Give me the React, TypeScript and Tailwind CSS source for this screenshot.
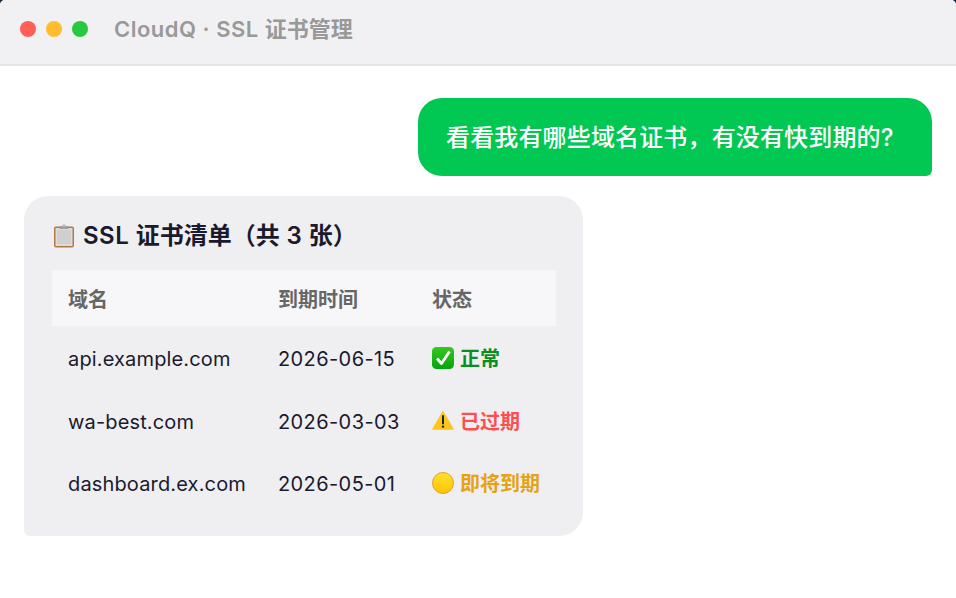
import React from "react";

const FONT = "font-['Inter','Noto_Sans_CJK_SC',sans-serif]";

const ClipboardIcon = () => (
  <svg width="24" height="24" viewBox="0 0 24 24" className="shrink-0">
    <rect x="2" y="2.5" width="20" height="21" rx="2" fill="#b07a3c" />
    <rect x="3.5" y="4" width="17" height="18" fill="#dcdcdc" />
    <rect x="5" y="6" width="14" height="14" fill="#cfcfcf" />
    <rect x="7.5" y="2" width="9" height="3" rx="1" fill="#9d9d9d" />
    <circle cx="12" cy="1.8" r="1.6" fill="#b5b5b5" />
  </svg>
);

const CheckIcon = () => (
  <svg width="22" height="22" viewBox="0 0 22 22" className="-mt-[3px] shrink-0">
    <defs>
      <linearGradient id="chk" x1="0" y1="0" x2="0" y2="1">
        <stop offset="0" stopColor="#35c81e" />
        <stop offset="1" stopColor="#04a50e" />
      </linearGradient>
    </defs>
    <rect width="22" height="22" rx="4.5" fill="url(#chk)" />
    <path d="M5 11.5 L9.5 16.5 L17.5 4.5" fill="none" stroke="#fff" strokeWidth="2.8" strokeLinejoin="round" />
  </svg>
);

const WarnIcon = () => (
  <svg width="22" height="20" viewBox="0 0 22 20" className="-mt-1 shrink-0">
    <path d="M11 0.5 L21.8 19 Q22 19.7 21 19.7 L1 19.7 Q0 19.7 0.2 19 Z" fill="#ffc51f" />
    <rect x="10" y="5" width="2" height="9.5" rx="1" fill="#222" />
    <circle cx="11" cy="16.6" r="1.2" fill="#222" />
  </svg>
);

const YellowIcon = () => (
  <svg width="22" height="22" viewBox="0 0 22 22" className="-mt-[2px] shrink-0">
    <defs>
      <linearGradient id="ylw" x1="0" y1="0" x2="0" y2="1">
        <stop offset="0" stopColor="#ffe033" />
        <stop offset="1" stopColor="#ffc400" />
      </linearGradient>
    </defs>
    <circle cx="11" cy="11" r="10.5" fill="url(#ylw)" stroke="#e0a030" strokeWidth="1" />
  </svg>
);

const rows = [
  { domain: "api.example.com", date: "2026-06-15", icon: <CheckIcon />, status: "正常", color: "text-[#0a8f1f]" },
  { domain: "wa-best.com", date: "2026-03-03", icon: <WarnIcon />, status: "已过期", color: "text-[#ff4d4f]" },
  { domain: "dashboard.ex.com", date: "2026-05-01", icon: <YellowIcon />, status: "即将到期", color: "text-[#e6a214]" },
];

export default function App() {
  return (
    <div className="bg-[#16283a]">
      <div className={`${FONT} h-[598px] w-[956px] overflow-hidden rounded-t-[5px] bg-white`}>
        <div className="flex h-[66px] items-center gap-[26px] border-b-2 border-[#e5e5e7] bg-[#f1f1f4] pb-[6px] pl-5">
          <div className="flex gap-[10px]">
            <div className="h-4 w-4 rounded-full bg-[#ff5f57]" />
            <div className="h-4 w-4 rounded-full bg-[#febc2e]" />
            <div className="h-4 w-4 rounded-full bg-[#28c840]" />
          </div>
          <span className="text-[22px] font-semibold text-[#999999]">
            <span className="tracking-[0.5px]">CloudQ · SSL </span>证书管理
          </span>
        </div>

        <div className="flex flex-col gap-5 px-6 pt-8">
          <div className="flex justify-end">
            <div className="w-[514px] rounded-[24px] rounded-br-[6px] bg-[#00c853] px-7 pt-[23px] pb-[21px] text-[24px] leading-[34px] font-medium tracking-[0.15px] text-white">
              看看我有哪些域名证书，有没有快到期的?
            </div>
          </div>

          <div className="w-[559px] rounded-[24px] rounded-bl-[6px] bg-[#efeff2] px-7 pt-6 pb-[22px]">
            <div className="mb-[18px] flex h-8 items-center gap-[7px] text-[24px] font-semibold text-[#1a1a2e]">
              <ClipboardIcon />
              <span>
                <span className="tracking-[0.5px]">SSL </span>证书清单（共<span className="tracking-[0.5px]"> 3 </span>张）
              </span>
            </div>
            <table className="w-[504px] table-fixed border-collapse">
              <thead>
                <tr className="h-14 bg-[#f7f7f9] text-left text-[20px] text-[#666666]">
                  <th className="w-[210px] pt-1 pl-4 font-semibold">域名</th>
                  <th className="w-[154px] pt-1 pl-4 font-semibold">到期时间</th>
                  <th className="pt-1 pl-4 font-semibold">状态</th>
                </tr>
              </thead>
              <tbody>
                {rows.map((row) => (
                  <tr key={row.domain} className="h-[62.5px] text-[20px] text-[#1a1a2e]">
                    <td className="pt-1 pl-4 tracking-[0.15px]">{row.domain}</td>
                    <td className="pt-1 pl-4 tracking-[0.4px]">{row.date}</td>
                    <td className="pt-1 pl-4">
                      <span className={`flex items-center gap-[6px] font-semibold ${row.color}`}>
                        {row.icon}
                        {row.status}
                      </span>
                    </td>
                  </tr>
                ))}
              </tbody>
            </table>
          </div>
        </div>
      </div>
    </div>
  );
}
